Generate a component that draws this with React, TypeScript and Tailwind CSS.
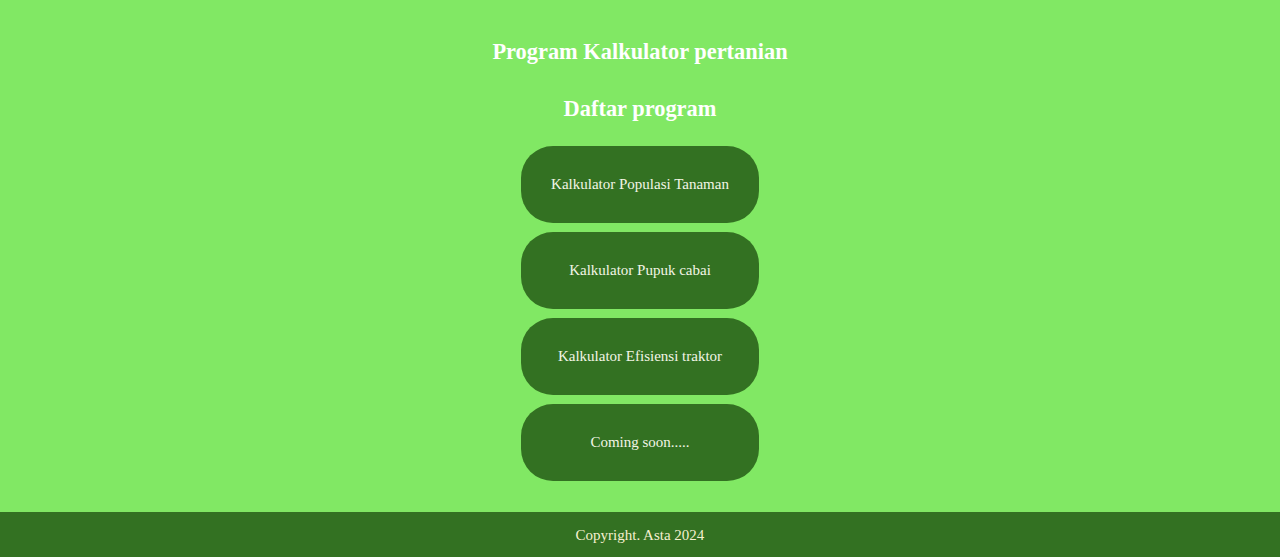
export default function App() {
  const programs = [
    "Kalkulator Populasi Tanaman",
    "Kalkulator Pupuk cabai",
    "Kalkulator Efisiensi traktor",
    "Coming soon.....",
  ];

  return (
    <div className="flex min-h-[557px] flex-col bg-[#81e864] font-['Liberation_Serif',serif]">
      <main className="flex flex-1 flex-col items-center pt-[39px]">
        <h2 className="text-[22.4px] leading-[26px] font-bold text-white">
          Program Kalkulator pertanian
        </h2>
        <h2 className="mt-[31px] text-[22.4px] leading-[26px] font-bold text-white">
          Daftar program
        </h2>

        <div className="mt-[24px] flex flex-col gap-[9px]">
          {programs.map((p) => (
            <button
              key={p}
              className="flex h-[77px] w-[238px] items-center justify-center rounded-[32px] bg-[#337122] text-[15px] text-[#f2f5e6]"
            >
              {p}
            </button>
          ))}
        </div>
      </main>

      <footer className="flex h-[45px] items-center justify-center bg-[#337122] pt-[2px] text-[15px] text-[#f5f0d0]">
        Copyright. Asta 2024
      </footer>
    </div>
  );
}
